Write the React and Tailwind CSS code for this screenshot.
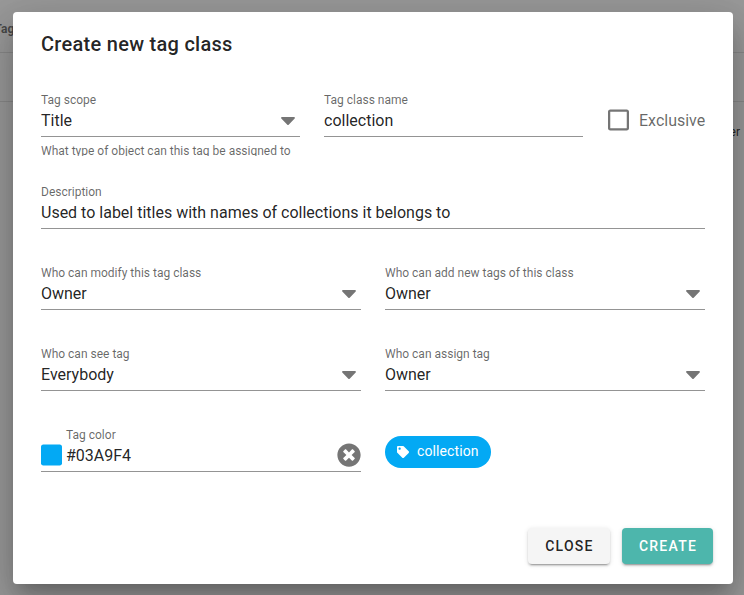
import { FaCaretDown, FaRegSquare, FaSquare, FaTag, FaTimesCircle } from "react-icons/fa";

function Field({ label, value, select, hint, before, after }) {
  return (
    <div className="min-w-0 flex-1">
      <div className="flex h-[45px] items-start border-b border-[#949494]">
        {before}
        <div className="min-w-0 flex-1">
          <div className="h-4 text-xs leading-4 whitespace-nowrap text-black/60">{label}</div>
          <div className="mt-[3px] h-5 text-base leading-5 tracking-normal whitespace-nowrap text-black/87">{value}</div>
        </div>
        {select && <FaCaretDown className="mt-4 size-6 text-[#757575]" />}
        {after}
      </div>
      {hint && (
        <div className="mt-2 h-[11px] overflow-hidden text-xs leading-3 whitespace-nowrap text-black/60">{hint}</div>
      )}
    </div>
  );
}

function PageBehind() {
  return (
    <div className="h-full bg-white">
      <div className="flex h-[53px] items-center border-b border-black/12 pt-1.5">
        <span className="-ml-[5.5px] text-xs font-bold text-black/60">Tag</span>
      </div>
      <div className="h-[49px] border-b border-black/12" />
      <div className="flex h-[60px] items-center justify-end pr-1 text-xs text-black/87">Owner</div>
    </div>
  );
}

export default function App() {
  return (
    <div className="relative h-[595px] w-[744px] overflow-hidden font-[Roboto,sans-serif]">
      <PageBehind />
      <div className="absolute inset-0 bg-[#212121]/46 px-[13px] pt-3 pr-[11px] pb-[11px]">
        <div className="flex h-[572px] w-[720px] flex-col rounded bg-white shadow-[0_11px_15px_-7px_rgba(0,0,0,0.2),0_24px_38px_3px_rgba(0,0,0,0.14),0_9px_46px_8px_rgba(0,0,0,0.12)]">
          <h1 className="mt-4 px-7 text-xl leading-8 font-medium tracking-[0.28px] text-black/87">
            Create new tag class
          </h1>
          <div className="flex flex-col px-7 pt-8">
            <div className="flex h-[92px] gap-6">
              <Field label="Tag scope" value="Title" select hint="What type of object can this tag be assigned to" />
              <Field label="Tag class name" value="collection" />
              <div className="mt-4 flex h-6 w-[98px] items-center">
                <FaRegSquare className="ml-[1.25px] h-6 w-[21px] shrink-0 text-[#757575]" />
                <span className="mt-0.5 ml-[9.75px] text-base leading-6 text-black/60">Exclusive</span>
              </div>
            </div>
            <div className="flex h-[81px]">
              <Field label="Description" value="Used to label titles with names of collections it belongs to" />
            </div>
            <div className="flex h-[81px] gap-6">
              <Field label="Who can modify this tag class" value="Owner" select />
              <Field label="Who can add new tags of this class" value="Owner" select />
            </div>
            <div className="flex h-[81px] gap-6">
              <Field label="Who can see tag" value="Everybody" select />
              <Field label="Who can assign tag" value="Owner" select />
            </div>
            <div className="flex gap-6">
              <Field
                label="Tag color"
                value="#03A9F4"
                before={<FaSquare className="mt-4 mr-1 h-6 w-[21px] text-[#03A9F4]" />}
                after={<FaTimesCircle className="mt-4 size-6 text-[#757575]" />}
              />
              <div className="flex-1">
                <span className="mt-[9px] inline-flex h-8 items-center rounded-full bg-[#03A9F4] px-3 text-sm text-white">
                  <FaTag className="mr-2 size-3" />
                  <span className="-mt-0.5 tracking-[0.1px]">collection</span>
                </span>
              </div>
            </div>
          </div>
          <div className="mt-auto flex justify-end gap-3 px-5 pb-5 text-sm font-medium tracking-[0.0892857143em]">
            <button className="h-9 w-[82px] rounded bg-[#f5f5f5] pl-px text-black/87 shadow-[0_3px_1px_-2px_rgba(0,0,0,0.2),0_2px_2px_0_rgba(0,0,0,0.14),0_1px_5px_0_rgba(0,0,0,0.12)]">
              CLOSE
            </button>
            <button className="h-9 w-[91px] rounded bg-[#4DB6AC] pl-px text-white shadow-[0_3px_1px_-2px_rgba(0,0,0,0.2),0_2px_2px_0_rgba(0,0,0,0.14),0_1px_5px_0_rgba(0,0,0,0.12)]">
              CREATE
            </button>
          </div>
        </div>
      </div>
    </div>
  );
}
